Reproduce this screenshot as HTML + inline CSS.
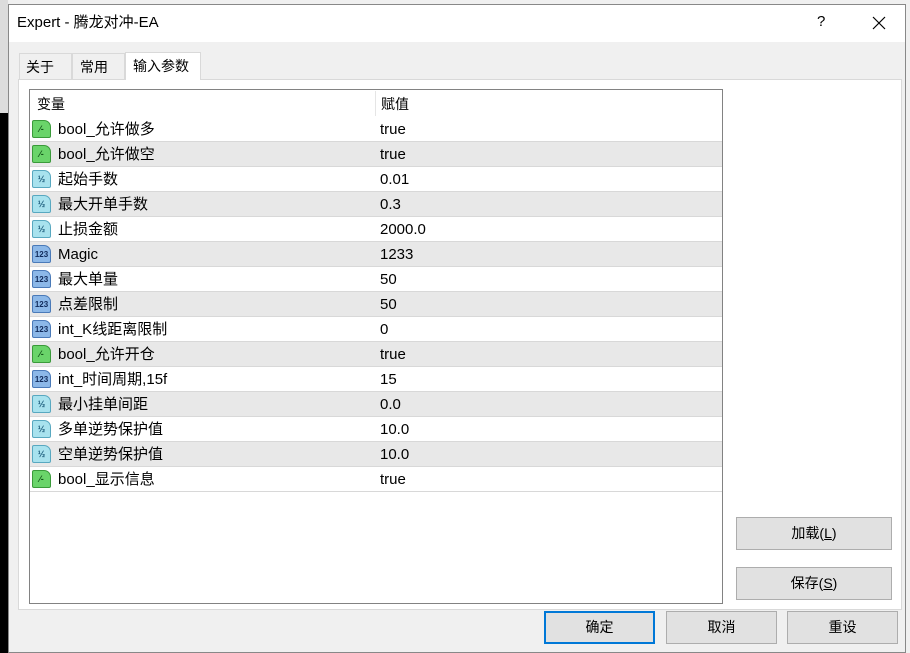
<!DOCTYPE html><html><head><meta charset="utf-8"><style>
body{margin:0;width:910px;height:653px;overflow:hidden;background:#f0f0f0;font-family:"Liberation Sans","Noto Sans CJK SC",sans-serif;font-size:14px;color:#000;position:relative}
.a{position:absolute}
.row{position:absolute;left:30px;width:692px;height:24px;border-bottom:1px solid #d8d8d8;line-height:24px;font-size:15px}
.row.g{background:#e8e8e8}
.row .n{position:absolute;left:28px;top:1px}
.row .v{position:absolute;left:350px;top:1px}
.ic{position:absolute;left:2px;top:3px;width:19px;height:18px;border-radius:2px 7px 2px 2px;font-size:9px;line-height:17px;text-align:center;font-weight:bold}
.b{background:#6ad46a;border:1px solid #3a9a3a;box-sizing:border-box;color:#14561a}
.h{background:#a8e2ee;border:1px solid #58a8c0;box-sizing:border-box;color:#1a5a7a}
.i{background:#8cb8e8;border:1px solid #4a7ab8;box-sizing:border-box;color:#102a5a;font-size:8px}
.btn{position:absolute;background:#e1e1e1;border:1px solid #adadad;box-sizing:border-box;text-align:center;line-height:30px;font-size:14px}
</style></head><body>
<div class="a" style="left:0;top:0;width:8px;height:113px;background:#dcdcdc"></div>
<div class="a" style="left:0;top:113px;width:8px;height:540px;background:#000"></div>
<div class="a" style="left:8px;top:4px;width:898px;height:649px;background:#f0f0f0;border:1px solid #888;box-sizing:border-box"></div>
<div class="a" style="left:9px;top:5px;width:896px;height:37px;background:#fff"></div>
<div class="a" style="left:17px;top:12px;font-size:15px;line-height:22px">Expert - 腾龙对冲-EA</div>
<div class="a" style="left:817px;top:13px;font-size:15px">?</div>
<svg class="a" style="left:872px;top:16px" width="14" height="14"><path d="M1 1L13 13M13 1L1 13" stroke="#000" stroke-width="1.2"/></svg>
<div class="a" style="left:18px;top:79px;width:884px;height:531px;background:#fff;border:1px solid #d9d9d9;box-sizing:border-box"></div>
<div class="a" style="left:19px;top:53px;width:53px;height:26px;border:1px solid #d9d9d9;border-bottom:none;box-sizing:border-box;background:#f0f0f0;line-height:26px;padding-left:6px">关于</div>
<div class="a" style="left:72px;top:53px;width:53px;height:26px;border:1px solid #d9d9d9;border-bottom:none;box-sizing:border-box;background:#f0f0f0;line-height:26px;padding-left:7px">常用</div>
<div class="a" style="left:125px;top:52px;width:76px;height:28px;border:1px solid #d9d9d9;border-bottom:none;box-sizing:border-box;background:#fff;line-height:26px;padding-left:7px">输入参数</div>
<div class="a" style="left:29px;top:89px;width:694px;height:515px;border:1px solid #828282;box-sizing:border-box;background:#fff"></div>
<div class="a" style="left:375px;top:91px;width:1px;height:25px;background:#e5e5e5"></div>
<div class="a" style="left:37px;top:92px;line-height:25px;font-size:14px">变量</div>
<div class="a" style="left:381px;top:92px;line-height:25px;font-size:14px">赋值</div>
<div class="row" style="top:117px"><span class="ic b">⁄‑</span><span class="n">bool_允许做多</span><span class="v">true</span></div>
<div class="row g" style="top:142px"><span class="ic b">⁄‑</span><span class="n">bool_允许做空</span><span class="v">true</span></div>
<div class="row" style="top:167px"><span class="ic h">½</span><span class="n">起始手数</span><span class="v">0.01</span></div>
<div class="row g" style="top:192px"><span class="ic h">½</span><span class="n">最大开单手数</span><span class="v">0.3</span></div>
<div class="row" style="top:217px"><span class="ic h">½</span><span class="n">止损金额</span><span class="v">2000.0</span></div>
<div class="row g" style="top:242px"><span class="ic i">123</span><span class="n">Magic</span><span class="v">1233</span></div>
<div class="row" style="top:267px"><span class="ic i">123</span><span class="n">最大单量</span><span class="v">50</span></div>
<div class="row g" style="top:292px"><span class="ic i">123</span><span class="n">点差限制</span><span class="v">50</span></div>
<div class="row" style="top:317px"><span class="ic i">123</span><span class="n">int_K线距离限制</span><span class="v">0</span></div>
<div class="row g" style="top:342px"><span class="ic b">⁄‑</span><span class="n">bool_允许开仓</span><span class="v">true</span></div>
<div class="row" style="top:367px"><span class="ic i">123</span><span class="n">int_时间周期,15f</span><span class="v">15</span></div>
<div class="row g" style="top:392px"><span class="ic h">½</span><span class="n">最小挂单间距</span><span class="v">0.0</span></div>
<div class="row" style="top:417px"><span class="ic h">½</span><span class="n">多单逆势保护值</span><span class="v">10.0</span></div>
<div class="row g" style="top:442px"><span class="ic h">½</span><span class="n">空单逆势保护值</span><span class="v">10.0</span></div>
<div class="row" style="top:467px"><span class="ic b">⁄‑</span><span class="n">bool_显示信息</span><span class="v">true</span></div>
<div class="btn" style="left:736px;top:517px;width:156px;height:33px">加载(<u>L</u>)</div>
<div class="btn" style="left:736px;top:567px;width:156px;height:33px">保存(<u>S</u>)</div>
<div class="btn" style="left:544px;top:611px;width:111px;height:33px;border:2px solid #0078d7;line-height:29px">确定</div>
<div class="btn" style="left:666px;top:611px;width:111px;height:33px">取消</div>
<div class="btn" style="left:787px;top:611px;width:111px;height:33px">重设</div>
</body></html>
